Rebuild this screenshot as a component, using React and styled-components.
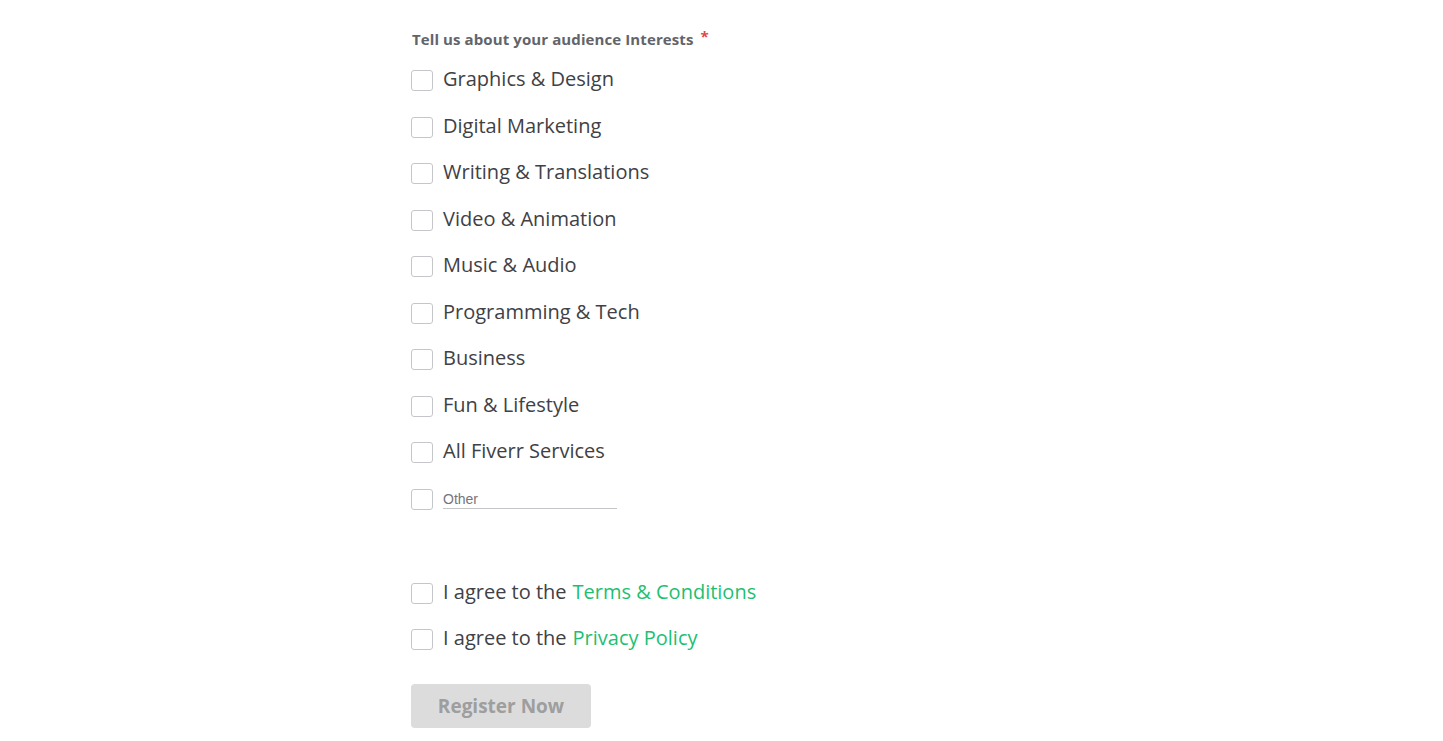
import React from "react";
import styled, { createGlobalStyle } from "styled-components";

const Global = createGlobalStyle`
  html, body { margin: 0; padding: 0; background: #fff; }
  body { font-family: "Open Sans", "Lato", sans-serif; color: #404145; }
  * { box-sizing: border-box; }
`;

const Page = styled.div`
  width: 621px;
  margin: 0 auto;
  padding-top: 28px;
  padding-bottom: 13px;
`;

const Heading = styled.div`
  font-size: 15px;
  line-height: 22px;
  font-weight: 700;
  color: #62646a;
  letter-spacing: 0.1px;
  padding-left: 1px;
`;

const Star = styled.span`
  color: #e04848;
  margin-left: 7px;
  position: relative;
  top: -3px;
`;

const List = styled.div`
  display: flex;
  flex-direction: column;
  gap: 25.5px;
  margin-top: 20px;
`;

const Agreements = styled(List)`
  margin-top: 73.5px;
  gap: 25px;
`;

const Row = styled.label`
  display: flex;
  align-items: center;
  height: 21px;
  gap: 10px;
  font-size: 20px;
  line-height: 21px;
  color: #404145;
  cursor: pointer;
`;

const Text = styled.span`
  position: relative;
  top: -2px;
`;

const Box = styled.span`
  width: 22px;
  height: 21px;
  flex: none;
  border: 1px solid #c5c6c9;
  border-radius: 3px;
  background: #fff;
`;

const Link = styled.a`
  color: #1dbf73;
  text-decoration: none;
  margin-left: 6px;
`;

const OtherInput = styled.input`
  width: 174px;
  border: none;
  border-bottom: 1px solid #c5c6c9;
  font-family: "Liberation Sans", Arial, sans-serif;
  font-size: 14px;
  padding: 1px 0 1px 0;
  margin-top: 0;
  outline: none;
  color: #404145;
  &::placeholder { color: #74767e; }
`;

const Button = styled.button`
  margin-top: 34px;
  width: 180px;
  height: 44px;
  border: none;
  border-radius: 4px;
  background: #dcdcdc;
  color: #9e9e9e;
  font-family: inherit;
  font-size: 19px;
  font-weight: 700;
  cursor: not-allowed;
`;

const interests = [
  "Graphics & Design",
  "Digital Marketing",
  "Writing & Translations",
  "Video & Animation",
  "Music & Audio",
  "Programming & Tech",
  "Business",
  "Fun & Lifestyle",
  "All Fiverr Services",
];

export default function App() {
  return (
    <>
      <Global />
      <Page>
        <Heading>
          Tell us about your audience Interests<Star>*</Star>
        </Heading>
        <List>
          {interests.map((t) => (
            <Row key={t}>
              <Box />
              <Text>{t}</Text>
            </Row>
          ))}
          <Row>
            <Box />
            <OtherInput placeholder="Other" />
          </Row>
        </List>
        <Agreements>
          <Row>
            <Box />
            <Text>
              I agree to the<Link href="#">Terms &amp; Conditions</Link>
            </Text>
          </Row>
          <Row>
            <Box />
            <Text>
              I agree to the<Link href="#">Privacy Policy</Link>
            </Text>
          </Row>
        </Agreements>
        <Button disabled>Register Now</Button>
      </Page>
    </>
  );
}
